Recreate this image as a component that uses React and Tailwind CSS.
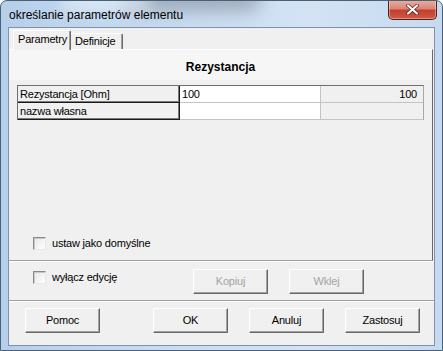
import React from 'react'

const ui = "font-['Liberation_Sans',Arial,sans-serif] text-[11px] leading-[13px] tracking-[-0.2px] text-black"

function Button({ label, disabled }) {
  return (
    <div
      className={`w-[75px] h-[25px] flex items-center justify-center bg-[#f0f0f0] border border-t-white border-l-white border-r-[#696969] border-b-[#696969] shadow-[inset_-1px_-1px_0_#a0a0a0] ${
        disabled ? 'text-[#a3a3a3]' : 'text-black'
      }`}
    >
      {label}
    </div>
  )
}

function Checkbox({ label }) {
  return (
    <div className="flex items-center gap-[6px]">
      <div className="w-[13px] h-[13px] border border-t-[#8a8a8a] border-l-[#8a8a8a] border-r-[#e8e8e8] border-b-[#e8e8e8] shadow-[inset_1px_1px_0_#c8c8c8] bg-[linear-gradient(135deg,#e6e6e6,#ffffff)]" />
      <span>{label}</span>
    </div>
  )
}

function Row({ label, value, right }) {
  return (
    <div className="flex h-[17px]">
      <div className="w-[162px] pl-[2px] flex items-center bg-[#f0f0f0] border-r border-b border-[#1a1a1a] shadow-[inset_-1px_-1px_0_#7a7a7a]">
        {label}
      </div>
      <div className="w-[141px] pl-[2px] flex items-center bg-white border-r border-b border-[#c4c4c4]">
        {value}
      </div>
      <div className="flex-1 pr-[6px] flex items-center justify-end bg-[#f0f0f0] border-b border-[#c4c4c4]">
        {right}
      </div>
    </div>
  )
}

export default function App() {
  return (
    <div className="w-[443px] h-[351px] relative overflow-hidden flex flex-col px-[7px] pb-[4px] rounded-t-[7px] border border-[#48607a] bg-[linear-gradient(90deg,#b6cfe9_0%,#c8dcf1_35%,#d3e3f4_70%,#c6daef_100%)]">
      {/* blurred glass behind the title bar */}
      <div className="absolute left-[120px] top-[-14px] w-[140px] h-[24px] rounded-full bg-[#7d8794] opacity-60 blur-[9px]" />
      <div className="absolute left-[60px] top-[-10px] w-[90px] h-[20px] rounded-full bg-[#e8f0f8] opacity-70 blur-[8px]" />

      {/* title bar */}
      <div className="relative h-[26px] flex items-start">
        <span className="mt-[7px] ml-[1px] font-['Liberation_Sans',Arial,sans-serif] text-[12px] leading-[14px] text-black">
          określanie parametrów elementu
        </span>
        <div className="ml-auto mr-[-2px] mt-[-1px] w-[49px] h-[20px] rounded-b-[5px] border border-[#5b1d16] border-t-0 flex items-center justify-center bg-[linear-gradient(180deg,#eab0a4_0%,#d98678_45%,#c2402f_55%,#cf5a44_100%)] shadow-[inset_0_0_0_1px_rgba(255,255,255,0.35)]">
          <svg width="13" height="11" viewBox="0 0 13 11">
            <path d="M2 1.5 L11 9.5 M11 1.5 L2 9.5" stroke="#5a1a14" strokeWidth="3.6" strokeLinecap="round" />
            <path d="M2 1.5 L11 9.5 M11 1.5 L2 9.5" stroke="#ffffff" strokeWidth="2.2" strokeLinecap="round" />
          </svg>
        </div>
      </div>

      {/* client area */}
      <div className={`${ui} relative flex-1 flex flex-col bg-[#f0f0f0] border border-[#7d93ad]`}>
        {/* tabs */}
        <div className="h-[21px] pl-[4px] flex items-end">
          <div className="relative z-10 w-[58px] h-[20px] mb-[-1px] pl-[4px] pt-[2px] bg-[#f0f0f0] border-t border-l border-r border-t-white border-l-white border-r-[#696969] rounded-t-[2px] shadow-[inset_-1px_0_0_#a0a0a0]">
            Parametry
          </div>
          <div className="w-[52px] h-[16px] pl-[4px] pt-[1px] bg-[#f0f0f0] border-t border-r border-t-white border-r-[#696969] rounded-t-[2px] shadow-[inset_-1px_0_0_#a0a0a0]">
            Definicje
          </div>
        </div>

        {/* tab panel */}
        <div className="h-[212px] mr-[1px] flex flex-col border-t border-r border-b border-t-white border-r-[#696969] border-b-[#a0a0a0]">
          <div className="h-[30px] pt-[10px] text-center bg-[#f6f6f6] font-bold text-[12px] leading-[14px] tracking-[0px]">
            Rezystancja
          </div>
          <div className="mt-[5px] ml-[8px] w-[407px] border-t border-l border-[#6e6e6e] border-r border-r-[#a8a8a8]">
            <Row label="Rezystancja [Ohm]" value="100" right="100" />
            <Row label="nazwa własna" value="" right="" />
          </div>
          <div className="flex-1" />
          <div className="pl-[24px] pb-[10px]">
            <Checkbox label="ustaw jako domyślne" />
          </div>
        </div>

        {/* edit row */}
        <div className="h-[39px] pt-[7px] pl-[24px] flex items-start border-t border-white">
          <div className="w-[160px] mt-[2px]">
            <Checkbox label="wyłącz edycję" />
          </div>
          <div className="flex gap-[21px]">
            <Button label="Kopiuj" disabled />
            <Button label="Wklej" disabled />
          </div>
        </div>

        <div className="h-[2px] border-t border-[#a0a0a0] bg-white" />

        {/* dialog buttons */}
        <div className="pt-[6px] pl-[16px] flex">
          <Button label="Pomoc" />
          <div className="ml-[53px] flex gap-[21px]">
            <Button label="OK" />
            <Button label="Anuluj" />
            <Button label="Zastosuj" />
          </div>
        </div>
      </div>
    </div>
  )
}
